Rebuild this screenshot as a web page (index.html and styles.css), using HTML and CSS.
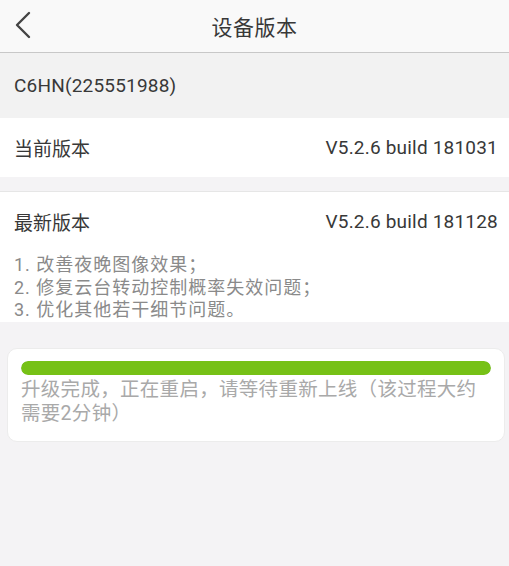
FILE: index.html
```html
<!DOCTYPE html>
<html lang="zh">
<head>
<meta charset="utf-8">
<title>设备版本</title>
<link rel="stylesheet" href="styles.css">
</head>
<body>
<div class="page">
  <header class="header">
    <span class="back">
      <svg width="18" height="28" viewBox="0 0 18 28"><path d="M15 2 L3 14 L15 26" fill="none" stroke="#444" stroke-width="2.4" stroke-linecap="round" stroke-linejoin="round"/></svg>
    </span>
    <h1 class="title">设备版本</h1>
  </header>
  <div class="device">C6HN(225551988)</div>
  <div class="row current">
    <span class="label">当前版本</span>
    <span class="value">V5.2.6 build 181031</span>
  </div>
  <div class="latest">
    <div class="row latest-head">
      <span class="label">最新版本</span>
      <span class="value">V5.2.6 build 181128</span>
    </div>
    <div class="notes">
      <div>1. 改善夜晚图像效果；</div>
      <div>2. 修复云台转动控制概率失效问题；</div>
      <div>3. 优化其他若干细节问题。</div>
    </div>
  </div>
  <div class="card">
    <div class="progress"><div class="fill" style="width:100%"></div></div>
    <p class="status">升级完成，正在重启，请等待重新上线（该过程大约需要2分钟）</p>
  </div>
</div>
</body>
</html>
```

FILE: styles.css
```css
html, body {
  margin: 0;
  padding: 0;
}
body {
  background: #f4f3f5;
  font-family: Roboto, "Noto Sans CJK SC", sans-serif;
  color: #383838;
  width: 509px;
  height: 566px;
  overflow: hidden;
}
.header {
  height: 52px;
  background: #f9f9f9;
  border-bottom: 1px solid #c8c8c8;
  display: flex;
  align-items: center;
  justify-content: center;
  position: relative;
}
.back {
  position: absolute;
  left: 14px;
  top: 11px;
  display: flex;
}
.title {
  margin: 0;
  font-size: 21px;
  font-weight: normal;
  color: #383838;
  letter-spacing: 0.5px;
}
.device {
  height: 65px;
  background: #f2f2f2;
  display: flex;
  align-items: center;
  padding-left: 14px;
  font-size: 19px;
  letter-spacing: 0.2px;
}
.row {
  display: flex;
  justify-content: space-between;
  align-items: center;
  padding: 0 11px 0 14px;
  font-size: 19px;
}
.value {
  letter-spacing: 0.2px;
}
.current {
  height: 59px;
  background: #fff;
}
.latest {
  margin-top: 14px;
  border-top: 1px solid #e6e6e6;
  background: #fff;
}
.latest-head {
  height: 58px;
}
.notes {
  margin-top: 4px;
  padding-left: 14px;
  font-size: 18px;
  line-height: 22.5px;
  color: #8a8a8a;
  letter-spacing: 1px;
}
.card {
  margin: 26px 4px 0 7px;
  background: #fff;
  border: 1px solid #ececec;
  border-radius: 10px;
  padding: 12px 13px 15px 13px;
}
.progress {
  height: 14px;
  border-radius: 7px;
  background: #e8e8e8;
  overflow: hidden;
}
.fill {
  height: 100%;
  background: #76c116;
  border-radius: 7px;
}
.status {
  margin: 3px 0 0 0;
  font-size: 19.5px;
  line-height: 24px;
  color: #a9a9a9;
  letter-spacing: 0.3px;
}
```
